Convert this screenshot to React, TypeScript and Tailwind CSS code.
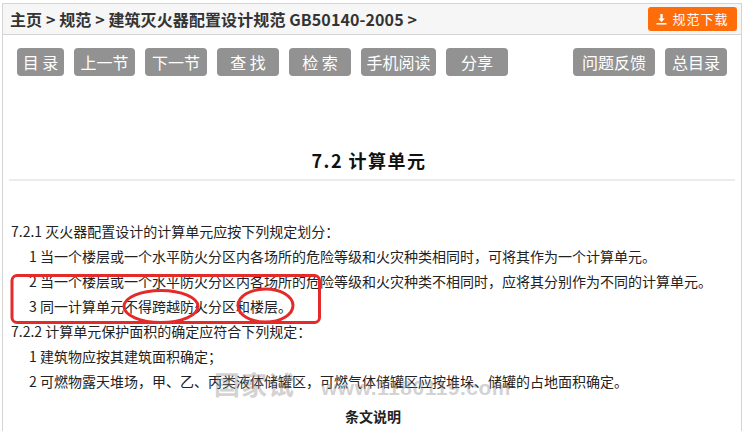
import React from 'react';

const cjk = { fontFamily: '"Microsoft YaHei", "Noto Sans CJK SC", "Noto Sans", sans-serif' };

const leftButtons = [
  { label: '目 录', w: 'w-[47px]' },
  { label: '上一节', w: 'w-[61px]' },
  { label: '下一节', w: 'w-[62px]' },
  { label: '查 找', w: 'w-[62px]' },
  { label: '检 索', w: 'w-[62px]' },
  { label: '手机阅读', w: 'w-[75px]' },
  { label: '分享', w: 'w-[62px]' },
];

const rightButtons = [
  { label: '问题反馈', w: 'w-[82px]' },
  { label: '总目录', w: 'w-[62px]' },
];

function NavButton({ label, w }: { label: string; w: string }) {
  return (
    <div className={`${w} h-[28px] rounded-[4px] bg-[#929292] text-white text-[16px] leading-[28px] text-center whitespace-pre`}>
      {label}
    </div>
  );
}

export default function App() {
  return (
    <div className="relative w-[746px] h-[431px] overflow-hidden bg-white text-[#222]" style={cjk}>
      <div className="ml-[2px] mt-[3px] w-[740px] h-[440px] border border-[#d4d4d4]">
        {/* header / breadcrumb */}
        <div className="h-[31px] bg-[#f6f6f6] border-b border-[#d4d4d4] flex items-center justify-between pl-[7px] pr-[4px]">
          <div className="text-[16px] font-bold text-[#333] tracking-[0.1px] whitespace-pre">
            主页 &gt; 规范 &gt; 建筑灭火器配置设计规范 GB50140-2005 &gt;
          </div>
          <div className="h-[24px] w-[89px] rounded-[3px] bg-[#ff6c0a] flex items-center justify-center gap-[5px] text-white text-[13px]">
            <svg width="11" height="11" viewBox="0 0 11 11" fill="white">
              <path d="M4.3 0h2.4v4.5h2.1L5.5 8 2.2 4.5h2.1z" />
              <rect x="0.5" y="9" width="10" height="1.6" />
            </svg>
            <span className="tracking-[1px]">规范下载</span>
          </div>
        </div>

        {/* nav buttons */}
        <div className="mt-[13px] flex pl-[14px] pr-[14px]">
          <div className="flex gap-[10px]">
            {leftButtons.map((b) => (
              <NavButton key={b.label} {...b} />
            ))}
          </div>
          <div className="ml-auto flex gap-[10px]">
            {rightButtons.map((b) => (
              <NavButton key={b.label} {...b} />
            ))}
          </div>
        </div>

        {/* title */}
        <div className="mt-[72px] text-center text-[18px] leading-[24px] font-bold tracking-[1.5px] text-[#111] pr-[6px]">
          7.2 计算单元
        </div>
        <div className="mt-[7px] mx-[6px] h-[2px] bg-[#ececec]" />

        {/* body */}
        <div className="mt-[38px] pl-[8px] text-[14px] leading-[25px] text-[#222]">
          <p>7.2.1 灭火器配置设计的计算单元应按下列规定划分：</p>
          <p className="pl-[18px]">1 当一个楼层或一个水平防火分区内各场所的危险等级和火灾种类相同时，可将其作为一个计算单元。</p>
          <p className="pl-[18px]">2 当一个楼层或一个水平防火分区内各场所的危险等级和火灾种类不相同时，应将其分别作为不同的计算单元。</p>
          <p className="pl-[18px]">3 同一计算单元不得跨越防火分区和楼层。</p>
          <p>7.2.2 计算单元保护面积的确定应符合下列规定：</p>
          <p className="pl-[18px]">1 建筑物应按其建筑面积确定；</p>
          <p className="pl-[18px]">2 可燃物露天堆场，甲、乙、丙类液体储罐区，可燃气体储罐区应按堆垛、储罐的占地面积确定。</p>
          <p className="mt-[10px] text-center font-bold text-[14px] pr-[6px]">条文说明</p>
        </div>
      </div>

      {/* watermark */}
      <div className="absolute left-[214px] top-[364px] flex items-baseline gap-[26px] text-[rgba(140,140,140,0.4)] pointer-events-none select-none">
        <span className="text-[26px] font-bold tracking-[1px]">国家试</span>
        <span className="text-[21px] font-bold tracking-[0.5px]" style={{ fontFamily: '"Liberation Sans", Arial, sans-serif' }}>www.1180119.com</span>
      </div>

      {/* red annotation marks */}
      <svg className="absolute left-0 top-0 pointer-events-none" width="746" height="431" viewBox="0 0 746 431" fill="none">
        <rect x="12" y="275.5" width="307.5" height="47" rx="5" stroke="#e52a2a" strokeWidth="3" />
        <ellipse cx="161" cy="306.5" rx="37" ry="16" stroke="#e52a2a" strokeWidth="3" />
        <ellipse cx="265.5" cy="305.5" rx="27.5" ry="16.5" stroke="#e52a2a" strokeWidth="3" />
      </svg>
    </div>
  );
}
